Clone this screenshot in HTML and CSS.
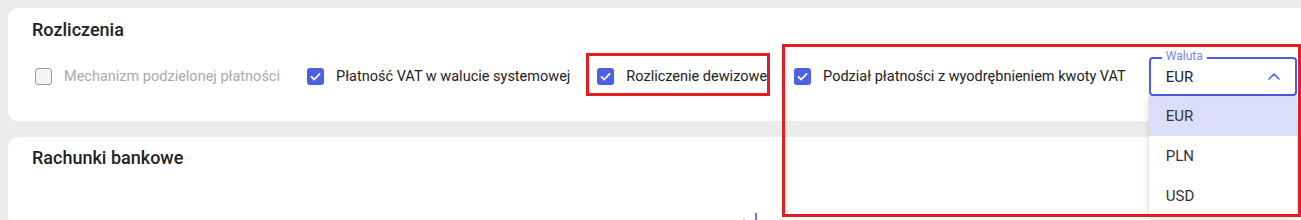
FILE: index.html
```html
<!DOCTYPE html>
<html lang="pl">
<head>
<meta charset="utf-8">
<title>Rozliczenia</title>
<link rel="stylesheet" href="styles.css">
</head>
<body>
<div class="page">
  <section class="card card-top">
    <h2 class="title">Rozliczenia</h2>
    <div class="row">
      <label class="check disabled">
        <span class="box"></span>
        <span class="text">Mechanizm podzielonej płatności</span>
      </label>
      <label class="check">
        <span class="box on"><svg viewBox="0 0 17 17" width="17" height="17"><path d="M4.5 8.8 L7.3 11.5 L12.6 5.9" fill="none" stroke="#fff" stroke-width="1.8" stroke-linecap="round" stroke-linejoin="round"/></svg></span>
        <span class="text">Płatność VAT w walucie systemowej</span>
      </label>
      <label class="check">
        <span class="box on"><svg viewBox="0 0 17 17" width="17" height="17"><path d="M4.5 8.8 L7.3 11.5 L12.6 5.9" fill="none" stroke="#fff" stroke-width="1.8" stroke-linecap="round" stroke-linejoin="round"/></svg></span>
        <span class="text">Rozliczenie dewizowe</span>
      </label>
      <label class="check check-last">
        <span class="box on"><svg viewBox="0 0 17 17" width="17" height="17"><path d="M4.5 8.8 L7.3 11.5 L12.6 5.9" fill="none" stroke="#fff" stroke-width="1.8" stroke-linecap="round" stroke-linejoin="round"/></svg></span>
        <span class="text">Podział płatności z wyodrębnieniem kwoty VAT</span>
      </label>
      <div class="select">
        <span class="select-label">Waluta</span>
        <span class="select-value">EUR</span>
        <svg class="chev" viewBox="0 0 12 7" width="12" height="7"><path d="M1 6 L6 1.2 L11 6" fill="none" stroke="#5566e4" stroke-width="1.6" stroke-linecap="round" stroke-linejoin="round"/></svg>
        <ul class="menu">
          <li class="item active">EUR</li>
          <li class="item">PLN</li>
          <li class="item">USD</li>
        </ul>
      </div>
    </div>
  </section>
  <section class="card card-bottom">
    <h2 class="title">Rachunki bankowe</h2>
    <div class="tail"><svg viewBox="0 0 16 8" width="16" height="8"><circle cx="2" cy="7" r="1" fill="#c9cbe0"/><rect x="13" y="1" width="2" height="7" fill="#6a78ee"/></svg></div>
  </section>
</div>
<div class="mark mark-a"></div>
<div class="mark mark-b"></div>
</body>
</html>
```
FILE: styles.css
```css
html, body {
  margin: 0;
  padding: 0;
  overflow: hidden;
}
body {
  background: #ececec;
  font-family: Roboto, "Liberation Sans", Arial, sans-serif;
  color: #222;
  height: 220px;
  position: relative;
}
.page {
  padding: 8px 0 0 8px;
  width: 1330px;
}
.card {
  background: #fff;
  border-radius: 10px 0 0 10px;
  padding: 0 24px;
}
.card-top {
  padding-top: 10px;
  padding-bottom: 25px;
}
.card-bottom {
  margin-top: 16px;
  padding-top: 9px;
  height: 80px;
}
.title {
  margin: 0;
  font-size: 18px;
  line-height: 24px;
  font-weight: 500;
  color: #222;
}
.row {
  display: flex;
  align-items: center;
  height: 39px;
  margin-top: 15px;
  padding-left: 3px;
  white-space: nowrap;
}
.check {
  display: flex;
  align-items: center;
  flex-shrink: 0;
  gap: 12px;
  margin-right: 27px;
  font-size: 14.5px;
  line-height: 20px;
  color: #222;
}
.check-last {
  margin-right: 23px;
}
.check.disabled {
  color: #a9a9a9;
}
.box {
  width: 17px;
  height: 17px;
  flex-shrink: 0;
  box-sizing: border-box;
  border-radius: 3px;
  border: 1.5px solid #9a9a9a;
  background: #f3f3f3;
  display: block;
  position: relative;
}
.box.on {
  border: none;
  background: #4d5fe3;
}
.box svg {
  display: block;
}
.select {
  position: relative;
  flex-shrink: 0;
  width: 148px;
  height: 39px;
  box-sizing: border-box;
  border: 2px solid #4b5de2;
  border-radius: 4px;
  display: flex;
  align-items: center;
  justify-content: space-between;
  padding: 0 15px;
}
.select-label {
  position: absolute;
  top: -9px;
  left: 11px;
  padding: 0 4px;
  background: #fff;
  font-size: 12px;
  line-height: 12px;
  color: #7b87ee;
}
.select-value {
  font-size: 15px;
  color: #222;
  line-height: 20px;
}
.chev {
  display: block;
}
.menu {
  position: absolute;
  top: 37px;
  left: -2px;
  width: 148px;
  margin: 0;
  padding: 0;
  list-style: none;
  background: #fff;
  box-shadow: 0 3px 8px rgba(0,0,0,0.12), 0 1px 3px rgba(0,0,0,0.08);
  z-index: 2;
}
.item {
  height: 40px;
  line-height: 40px;
  padding-left: 17px;
  font-size: 15px;
  color: #333;
}
.item.active {
  background: #dbdef8;
}
.tail {
  margin-top: 42px;
  margin-left: 710px;
  height: 8px;
}
.tail svg {
  display: block;
}
.mark {
  position: absolute;
  border: 3px solid #e41d25;
  box-sizing: border-box;
  z-index: 5;
}
.mark-a {
  left: 586px;
  top: 53px;
  width: 184px;
  height: 43px;
}
.mark-b {
  left: 782px;
  top: 44px;
  width: 519px;
  height: 173px;
}
```
